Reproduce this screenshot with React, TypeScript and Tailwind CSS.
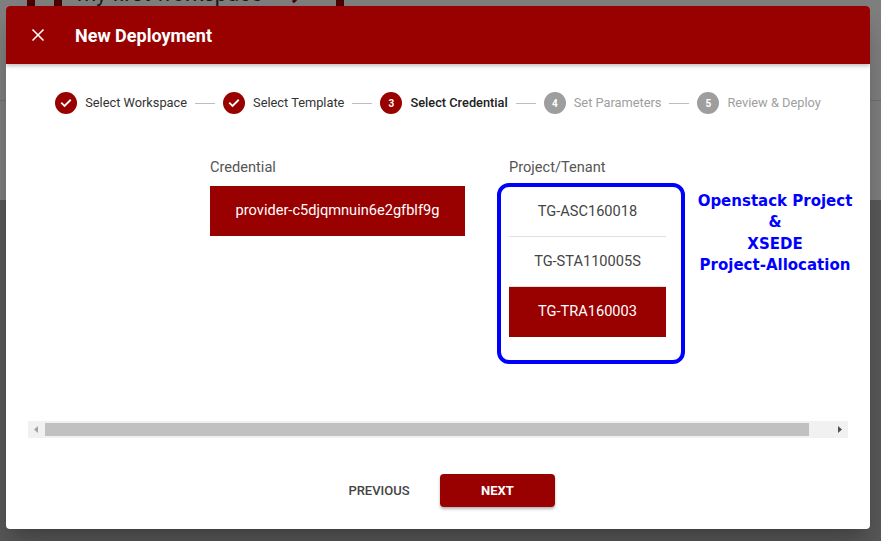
import { X } from "lucide-react";

const steps = [
  { label: "Select Workspace", state: "done" },
  { label: "Select Template", state: "done" },
  { label: "Select Credential", state: "active" },
  { label: "Set Parameters", state: "todo" },
  { label: "Review & Deploy", state: "todo" },
];

const projects = ["TG-ASC160018", "TG-STA110005S", "TG-TRA160003"];

function Check() {
  return (
    <svg width="14" height="14" viewBox="0 0 24 24" fill="none" stroke="white" strokeWidth="3.2" strokeLinecap="square">
      <path d="M5 12.5l4.5 4.5L19 7.5" />
    </svg>
  );
}

export default function App() {
  return (
    <div className="relative w-[881px] h-[541px] overflow-hidden font-['Roboto',sans-serif]">
      {/* PAGE BEHIND */}
      <div className="h-[200px] bg-white relative">
        <div className="flex items-start h-[20px] overflow-hidden">
          <div className="ml-[27px] w-[35px] h-[30px] -mt-[10px] border-x-[8px] border-[#990000]" />
          <span className="ml-[15px] -mt-[19px] text-[22px] leading-[26px] text-[#333]">my first workspace</span>
          <div className="ml-[24px] -mt-[16px] w-[16px] h-[16px] border-r-[3px] border-b-[3px] border-[#990000] rotate-[-45deg]" />
          <div className="ml-[34px] w-[8px] h-[20px] bg-[#990000]" />
        </div>
        <div className="mt-[80px] h-px bg-[#e0e0e0]" />
      </div>
      <div className="h-[341px] bg-[#b3b3b3]" />
      <div className="absolute inset-0 bg-black/50" />

      {/* DIALOG */}
      <div className="absolute left-[6px] top-[6px] w-[864px] h-[523px] bg-white rounded-[4px] shadow-[0_11px_15px_-7px_rgba(0,0,0,0.2),0_24px_38px_3px_rgba(0,0,0,0.14)] flex flex-col overflow-hidden">
        {/* HEADER */}
        <div className="h-[58px] shrink-0 bg-[#990000] flex items-center shadow-[0_2px_4px_rgba(0,0,0,0.25)] relative z-10">
          <X size={20} strokeWidth={2} className="ml-[22px] text-white" />
          <span className="ml-[27px] text-white text-[18px] font-bold">New Deployment</span>
        </div>

        {/* STEPPER */}
        <div className="mt-[28px] flex items-center justify-center h-[22px]">
          {steps.map((s, i) => (
            <div key={i} className="flex items-center">
              {i > 0 && <div className="mx-[8px] w-[20px] h-px bg-[#bdbdbd]" />}
              <div
                className={
                  s.state === "todo"
                    ? "w-[22px] h-[22px] rounded-full bg-[#9e9e9e] flex items-center justify-center text-white text-[10px] font-bold"
                    : "w-[22px] h-[22px] rounded-full bg-[#990000] flex items-center justify-center text-white text-[10px] font-bold"
                }
              >
                {s.state === "done" ? <Check /> : i + 1}
              </div>
              <span
                className={
                  s.state === "todo"
                    ? "ml-[8px] text-[12.8px] text-[#9e9e9e]"
                    : s.state === "active"
                    ? "ml-[8px] text-[12.8px] font-medium text-[#212121]"
                    : "ml-[8px] text-[12.8px] text-[#333]"
                }
              >
                {s.label}
              </span>
            </div>
          ))}
        </div>

        {/* CONTENT */}
        <div className="mt-[43px] pl-[204px] flex items-start">
          <div className="w-[255px]">
            <div className="text-[14.6px] leading-[20px] text-[#555]">Credential</div>
            <div className="mt-[9px] h-[50px] bg-[#990000] flex items-center justify-center text-white text-[14.6px]">
              provider-c5djqmnuin6e2gfblf9g
            </div>
          </div>

          <div className="ml-[32px] w-[188px]">
            <div className="pl-[12px] text-[14.6px] leading-[20px] text-[#555]">Project/Tenant</div>
            <div className="mt-[6px] h-[181px] border-4 border-[#0000ff] rounded-[12px] pl-[8px]">
              {projects.map((p, i) => (
                <div
                  key={p}
                  className={
                    i === 2
                      ? "w-[157px] h-[50px] bg-[#990000] text-white text-[14.6px] flex items-center justify-center"
                      : "w-[157px] h-[50px] border-b border-[#e0e0e0] text-[#444] text-[14.6px] flex items-center justify-center"
                  }
                >
                  {p}
                </div>
              ))}
            </div>
          </div>

          <div className="ml-[10px] mt-[34px] w-[160px] text-center text-[#0000ff] font-bold text-[15px] leading-[21.3px] font-['DejaVu_Sans',sans-serif]">
            <div>Openstack Project</div>
            <div>&amp;</div>
            <div>XSEDE</div>
            <div>Project-Allocation</div>
          </div>
        </div>

        {/* SCROLLBAR */}
        <div className="mt-[57px] mx-[22px] h-[17px] bg-[#f1f1f1] flex items-center">
          <svg width="17" height="17" viewBox="0 0 17 17" className="shrink-0">
            <path d="M10 5 L6 8.5 L10 12 Z" fill="#a3a3a3" />
          </svg>
          <div className="w-[764px] h-[13px] bg-[#c1c1c1]" />
          <div className="flex-1" />
          <svg width="17" height="17" viewBox="0 0 17 17" className="shrink-0">
            <path d="M7 5 L11 8.5 L7 12 Z" fill="#505050" />
          </svg>
        </div>

        {/* FOOTER */}
        <div className="mt-[36px] flex items-center justify-center gap-[3px]">
          <button className="w-[116px] h-[33px] text-[13px] font-medium text-[#444]">PREVIOUS</button>
          <button className="w-[115px] h-[33px] rounded-[4px] bg-[#990000] text-white text-[13px] font-bold shadow-[0_2px_3px_rgba(0,0,0,0.3)]">
            NEXT
          </button>
        </div>
      </div>
    </div>
  );
}
